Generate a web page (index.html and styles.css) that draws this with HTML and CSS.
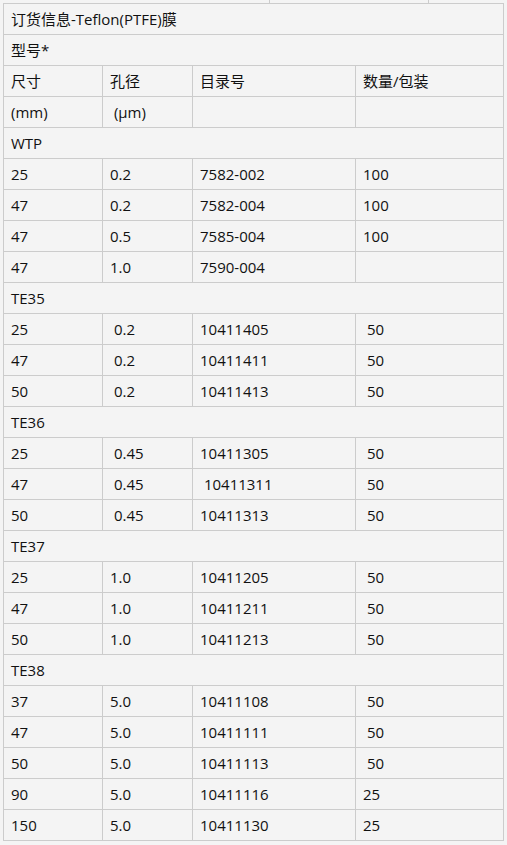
FILE: index.html
```html
<!DOCTYPE html>
<html lang="zh-CN">
<head>
    <meta charset="UTF-8">
    <meta name="viewport" content="width=device-width, initial-scale=1.0">
    <title>订货信息-Teflon(PTFE)膜</title>
    <link rel="stylesheet" href="styles.css">
</head>
<body>
    <div class="page">
        <div class="prev-table">
            <div class="prev-cell prev-a"></div>
            <div class="prev-cell prev-b"></div>
            <div class="prev-cell prev-c"></div>
        </div>

        <table class="order-table">
            <colgroup>
                <col class="c-size">
                <col class="c-pore">
                <col class="c-cat">
                <col class="c-qty">
            </colgroup>
            <tbody>
                <tr><td colspan="4">订货信息-Teflon(PTFE)膜</td></tr>
                <tr><td colspan="4">型号*</td></tr>
                <tr><td>尺寸</td><td>孔径</td><td>目录号</td><td>数量/包装</td></tr>
                <tr><td>(mm)</td><td>&nbsp;(µm)</td><td></td><td></td></tr>

                <tr><td colspan="4">WTP</td></tr>
                <tr><td>25</td><td>0.2</td><td>7582-002</td><td>100</td></tr>
                <tr><td>47</td><td>0.2</td><td>7582-004</td><td>100</td></tr>
                <tr><td>47</td><td>0.5</td><td>7585-004</td><td>100</td></tr>
                <tr><td>47</td><td>1.0</td><td>7590-004</td><td></td></tr>

                <tr><td colspan="4">TE35</td></tr>
                <tr><td>25</td><td>&nbsp;0.2</td><td>10411405</td><td>&nbsp;50</td></tr>
                <tr><td>47</td><td>&nbsp;0.2</td><td>10411411</td><td>&nbsp;50</td></tr>
                <tr><td>50</td><td>&nbsp;0.2</td><td>10411413</td><td>&nbsp;50</td></tr>

                <tr><td colspan="4">TE36</td></tr>
                <tr><td>25</td><td>&nbsp;0.45</td><td>10411305</td><td>&nbsp;50</td></tr>
                <tr><td>47</td><td>&nbsp;0.45</td><td>&nbsp;10411311</td><td>&nbsp;50</td></tr>
                <tr><td>50</td><td>&nbsp;0.45</td><td>10411313</td><td>&nbsp;50</td></tr>

                <tr><td colspan="4">TE37</td></tr>
                <tr><td>25</td><td>1.0</td><td>10411205</td><td>&nbsp;50</td></tr>
                <tr><td>47</td><td>1.0</td><td>10411211</td><td>&nbsp;50</td></tr>
                <tr><td>50</td><td>1.0</td><td>10411213</td><td>&nbsp;50</td></tr>

                <tr><td colspan="4">TE38</td></tr>
                <tr><td>37</td><td>5.0</td><td>10411108</td><td>&nbsp;50</td></tr>
                <tr><td>47</td><td>5.0</td><td>10411111</td><td>&nbsp;50</td></tr>
                <tr><td>50</td><td>5.0</td><td>10411113</td><td>&nbsp;50</td></tr>
                <tr><td>90</td><td>5.0</td><td>10411116</td><td>25</td></tr>
                <tr><td>150</td><td>5.0</td><td>10411130</td><td>25</td></tr>
            </tbody>
        </table>
    </div>
</body>
</html>
```

FILE: styles.css
```css
:root {
    --background: #f4f4f4;
    --border: #cccccc;
    --text: #111111;
}

body {
    margin: 0;
    background-color: var(--background);
    color: var(--text);
    font-family: 'Open Sans', 'Noto Sans CJK SC', sans-serif;
    font-size: 15px;
}

.page {
    padding: 0 5px 0 3px;
}

/* tail end of the table above, scrolled almost out of view */
.prev-table {
    display: flex;
    height: 3px;
}

.prev-cell {
    box-sizing: border-box;
}

.prev-a {
    width: 267px;
    border-right: 1px solid var(--border);
}

.prev-b {
    width: 159px;
    border-right: 1px solid var(--border);
}

.prev-c {
    flex: 1;
}

.order-table {
    width: 500px;
    border-collapse: collapse;
    table-layout: fixed;
}

.c-size { width: 99px; }
.c-pore { width: 90px; }
.c-cat  { width: 163px; }
.c-qty  { width: 148px; }

.order-table td {
    border: 1px solid var(--border);
    height: 31px;
    padding: 0 0 0 7px;
    box-sizing: border-box;
    line-height: 20px;
    vertical-align: middle;
    white-space: nowrap;
}
```
